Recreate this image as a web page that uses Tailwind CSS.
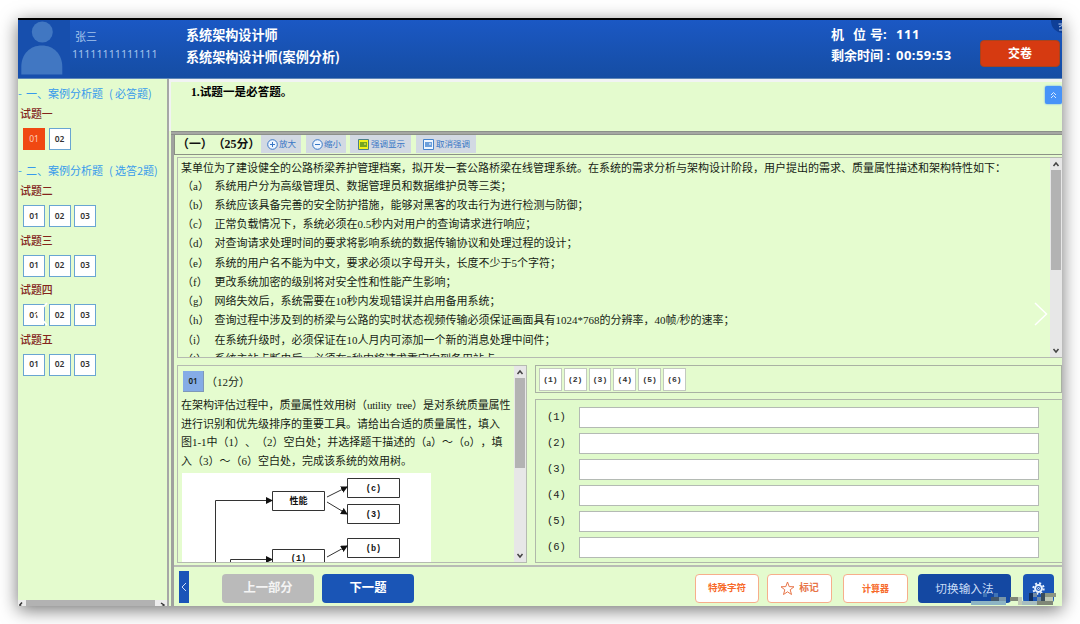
<!DOCTYPE html>
<html lang="zh-CN">

<head>
    <meta charset="UTF-8">
    <meta name="viewport" content="width=device-width, initial-scale=1.0">
    <title>系统架构设计师(案例分析)</title>
    <script src="https://cdn.jsdelivr.net/npm/@tailwindcss/browser@4"></script>
</head>

<body class="bg-white w-[1080px] h-[624px] overflow-hidden p-[18px] [text-spacing-trim:space-all] font-['Noto_Sans','Noto_Sans_CJK_SC',sans-serif]">
<div class="relative w-[1044px] h-[588px] shadow-[0_4px_17px_rgba(0,0,0,0.55)]">
<div class="w-full h-full flex flex-col overflow-hidden bg-[#e4fbce] whitespace-nowrap">

    <!-- Header -->
    <header class="relative h-[60px] shrink-0 flex border-t-2 border-black bg-linear-to-b from-[#1b58c4] to-[#154da3] text-white">
        <div class="w-[52px] h-[58px] bg-[#174fad]">
            <svg class="w-[52px] h-[58px]" viewBox="0 0 52 58" fill="#4177c2">
                <circle cx="24.300" cy="12" r="10.500" />
                <path d="M3.300 54.500V47C3.300 34 12 25.500 23.800 25.500S44.300 34 44.300 47v7.500z" />
            </svg>
        </div>
        <div class="w-[116px] pl-[2px] text-[#a4c4ec]">
            <div class="h-[17px] mt-[8px] pl-[3px] leading-[17px] text-[11px]">张三</div>
            <div class="h-[18px] leading-[18px] text-[10.7px]">11111111111111</div>
        </div>
        <div class="w-[645px] pt-[4px] text-[13.1px] font-bold font-['Noto_Sans_CJK_SC',sans-serif]">
            <div class="h-[22px] leading-[22px]">系统架构设计师</div>
            <div class="h-[22px] leading-[22px]">系统架构设计师(案例分析)</div>
        </div>
        <div class="w-[149px] pt-[4px] text-[13px] font-bold">
            <div class="h-[21px] leading-[21px] flex"><span class="w-[22px]">机</span><span class="w-[17px]">位</span><span class="w-[26px]">号:</span><span class="tracking-[0.6px]">111</span></div>
            <div class="h-[21px] leading-[21px] flex"><span class="w-[65px]">剩余时间 :</span><span class="tracking-[0.45px]">00:59:53</span></div>
        </div>
        <button class="mt-[20px] w-[80px] h-[27px] rounded-[4px] border border-[#a8431f] bg-[#d63a11] text-[12px] font-bold">交卷</button>
        <svg class="absolute right-0 top-0 w-[12px] h-[15px]" viewBox="0 0 12 15">
            <circle cx="13" cy="1" r="12" fill="#0f3f97" />
            <path d="M8.500 4h4M9 7l3-1.500M9 10h3" stroke="#b6cdf0" fill="none" />
        </svg>
    </header>

    <div class="flex-1 min-h-0 flex border-t border-[#5e86b8]">
        <!-- Question list -->
        <aside class="w-[149px] flex flex-col text-[11px] font-['Noto_Sans_CJK_SC',sans-serif]">
            <div class="mt-[4px] h-[21px] leading-[20px] text-[#379aec] flex"><span class="w-[8px]">-</span><span class="w-[22px]">一、</span>案例分析题<span class="w-[12px] pl-[6px]">(</span>必答题)</div>
            <div class="h-[18px] leading-[18px] pl-[2px] text-[10.9px] font-medium text-[#83251c]">试题一</div>
            <div class="mt-[6px] pl-[5px] flex gap-[3.5px] text-[8.5px] font-['Noto_Sans']">
                <span class="w-[22px] h-[22px] flex items-center justify-center bg-[#f04812] text-[#ffd0bd]">01</span>
                <span class="w-[22px] h-[22px] flex items-center justify-center bg-white border border-[#69a5d2] font-semibold text-[#333]">02</span>
            </div>
            <div class="mt-[10px] h-[21px] leading-[20px] text-[#379aec] flex"><span class="w-[8px]">-</span><span class="w-[22px]">二、</span>案例分析题<span class="w-[12px] pl-[6px]">(</span>选答2题)</div>
            <div id="optional"></div>
            <!-- horizontal scrollbar -->
            <div class="mt-auto h-[6px] flex justify-between bg-[#ececec] overflow-hidden">
                <svg class="w-[8px] h-[6px]" viewBox="0 0 8 6"><path d="M4 2.500 1.800 5 4 7.500" stroke="#333" stroke-width="1.500" fill="none" /></svg>
                <div class="w-[129px] bg-[#b2b2b2]"></div>
                <svg class="w-[12px] h-[6px]" viewBox="0 0 12 6"><path d="M6 3 9 5 6 7.500" stroke="#333" stroke-width="1.500" fill="none" /></svg>
            </div>
        </aside>
        <div class="w-[2px] bg-[#a6a7a6]"></div>

        <main class="flex-1 min-w-0 flex flex-col">
            <div class="relative h-[52px] shrink-0 border-t-[3px] border-l-2 border-[#f1f3f3]">
                <div class="pl-[20px] h-[21px] leading-[22px] text-[11.6px] font-bold text-black font-['Liberation_Serif','Noto_Sans_CJK_SC',serif]">1.试题一是必答题。</div>
                <div class="absolute right-0 top-[4px] w-[17px] h-[18px] rounded-[2px] bg-[#4793f8] flex items-center justify-center shadow-[0_0_2px_#4793f8]">
                    <svg class="w-[7px] h-[8px]" viewBox="0 0 7 8" fill="none" stroke="#d9eaff"><path d="M1 4l2.500-2.500L6 4M1 7l2.500-2.500L6 7" /></svg>
                </div>
            </div>
            <div class="h-[4px] shrink-0 bg-[#a5a7a3] border-y border-[#8c908a] ml-[2px]"></div>

            <div class="flex-1 min-h-0 ml-[2px] flex flex-col border-l-[3px] border-[#a0a29f]">
                <!-- Toolbar -->
                <div class="h-[20px] shrink-0 flex border-b border-l border-[#8b9285] text-[#3776c5] text-[8.5px]">
                    <div class="w-[86px] pl-[2px] leading-[18px] text-[11.9px] font-bold text-[#111] font-['Liberation_Serif','Noto_Sans_CJK_SC',serif]">（一）（25分）</div>
                    <div class="w-[40px] h-[18px] mr-[5px] bg-[#d2d9e3] flex items-center pl-[6px] gap-[1px]">
                        <svg class="w-[11px] h-[11px]" viewBox="0 0 11 11" stroke="#3776c5" fill="#edf5ff"><circle cx="5.500" cy="5.500" r="4.800" /><path d="M3 5.500h5M5.500 3v5" /></svg>放大
                    </div>
                    <div class="w-[40px] h-[18px] mr-[4px] bg-[#d2d9e3] flex items-center pl-[6px] gap-[1px]">
                        <svg class="w-[11px] h-[11px]" viewBox="0 0 11 11" stroke="#3776c5" fill="#edf5ff"><circle cx="5.500" cy="5.500" r="4.800" /><path d="M3 5.500h5" /></svg>缩小
                    </div>
                    <div class="w-[61px] h-[18px] mr-[5px] bg-[#d2d9e3] flex items-center pl-[8px] gap-[2px]">
                        <svg class="w-[11px] h-[11px]" viewBox="0 0 11 11"><path d="M.5.500h10v10H.5z" fill="#f2f218" stroke="#4a7f88" /><path d="M2 3h7v5H2z" fill="#76a51e" /><path d="M6 5h2" stroke="#f5f56b" /></svg>强调显示
                    </div>
                    <div class="w-[60px] h-[18px] bg-[#d2d9e3] flex items-center pl-[7px] gap-[2px]">
                        <svg class="w-[11px] h-[11px]" viewBox="0 0 11 11"><path d="M.5.500h10v10H.5z" fill="#eef6ff" stroke="#4583cc" /><path d="M2 3h7v5H2z" fill="#6c9fdb" /><path d="M6 5h2" stroke="#fff" /></svg>取消强调
                    </div>
                </div>

                <!-- Background text -->
                <div class="relative mt-[2px] ml-[3px] h-[201px] shrink-0 flex border border-r-0 border-[#b5bab1] bg-[#e5fccf] text-[#161c14] text-[11px] font-['Liberation_Serif','Noto_Sans_CJK_SC',serif]">
                    <div class="flex-1 min-w-0 overflow-hidden pl-[3px]">
                        <div class="h-[18.500px] leading-[21px]">某单位为了建设健全的公路桥梁养护管理档案，拟开发一套公路桥梁在线管理系统。在系统的需求分析与架构设计阶段，用户提出的需求、质量属性描述和架构特性如下：</div>
                        <div id="needs"></div>
                    </div>
                    <svg class="absolute right-[14px] top-[143px] w-[14px] h-[26px]" viewBox="0 0 14 26" fill="none" stroke="#fff" stroke-width="1.500"><path d="M1 2l11.500 11L1 24" /></svg>
                    <div class="w-[12px] bg-[#e7e7e7] flex flex-col items-center">
                        <svg class="w-[8px] h-[12px]" viewBox="0 0 8 12" fill="none" stroke="#444" stroke-width="1.500"><path d="M1.500 8 4 5l2.500 3" /></svg>
                        <div class="w-[10px] h-[100px] bg-[#b3b3b3]"></div>
                        <svg class="w-[8px] h-[12px] mt-auto" viewBox="0 0 8 12" fill="none" stroke="#444" stroke-width="1.500"><path d="M1.500 4 4 7l2.500-3" /></svg>
                    </div>
                </div>

                <div class="mt-[7px] ml-[3px] h-[198px] shrink-0 flex">
                    <!-- Question -->
                    <div class="w-[350px] flex border border-[#b5bab1] bg-[#e5fccf] text-[#161c14] text-[11px] font-['Liberation_Serif','Noto_Sans_CJK_SC',serif]">
                        <div class="flex-1 min-w-0 overflow-hidden pl-[3px]">
                            <div class="mt-[5px] h-[25px] pl-[2px] flex">
                                <span class="w-[21px] h-[21px] flex items-center justify-center bg-[#85ace6] border-r border-b border-[#7e98b8] text-[8px] font-semibold font-['Noto_Sans']">01</span>
                                <span class="leading-[22px] ml-[2px]">（12分）</span>
                            </div>
                            <div class="leading-[18.500px]">
                                <div class="tracking-[-0.06px]">在架构评估过程中，质量属性效用树（<span class="tracking-[-0.25px]">utility&nbsp; tree</span>）是对系统质量属性</div>
                                <div>进行识别和优先级排序的重要工具。请给出合适的质量属性，填入</div>
                                <div class="tracking-[-0.02px]">图1-1中（1）、（2）空白处；并选择题干描述的（a）～（o），填</div>
                                <div>入（3）～（6）空白处，完成该系统的效用树。</div>
                            </div>
                            <svg class="ml-[1px] mt-[3px] w-[249px] h-[120px] bg-white" viewBox="0 0 249 120" fill="none" stroke="#333">
                                <defs>
                                    <marker id="head" markerWidth="8" markerHeight="8" refX="6" refY="3.500" orient="auto" markerUnits="userSpaceOnUse"><path d="M0 0l7 3.500-7 3.500z" fill="#111" stroke="none" /></marker>
                                </defs>
                                <path d="M90.500 18.500h52v19h-52zM165.500 5.500h52v19h-52zM165.500 31.500h52v19h-52zM90.500 76.500h52v19h-52zM165.500 65.500h52v19h-52z" />
                                <path d="M33.500 120V27.500H90" marker-end="url(#head)" />
                                <path d="M48.500 120V86.500H90" marker-end="url(#head)" />
                                <path d="M145 24l20-10" marker-end="url(#head)" />
                                <path d="M145 29l20 12" marker-end="url(#head)" />
                                <path d="M145 84l20-11" marker-end="url(#head)" />
                                <g fill="#111" stroke="none" font-size="9" text-anchor="middle" font-weight="bold">
                                    <text x="116.500" y="31">性能</text>
                                    <g font-family="Liberation Mono" font-size="8.500">
                                        <text x="191.500" y="18">(c)</text>
                                        <text x="191.500" y="44">(3)</text>
                                        <text x="116.500" y="88">(1)</text>
                                        <text x="191.500" y="78">(b)</text>
                                    </g>
                                </g>
                            </svg>
                        </div>
                        <div class="w-[12px] bg-[#e7e7e7] flex flex-col items-center">
                            <svg class="w-[8px] h-[12px]" viewBox="0 0 8 12" fill="none" stroke="#444" stroke-width="1.500"><path d="M1.500 8 4 5l2.500 3" /></svg>
                            <div class="w-[10px] h-[90px] bg-[#b3b3b3]"></div>
                            <svg class="w-[8px] h-[12px] mt-auto" viewBox="0 0 8 12" fill="none" stroke="#444" stroke-width="1.500"><path d="M1.500 4 4 7l2.500-3" /></svg>
                        </div>
                    </div>

                    <!-- Answers -->
                    <div class="flex-1 ml-[8px] flex flex-col font-['Liberation_Mono',monospace]">
                        <div id="tabs" class="h-[28px] pl-[3px] pt-[2px] flex gap-[2px] border border-[#a9b1a3]"></div>
                        <div id="answers" class="mt-[6px] flex-1 pt-[7px] pl-[11px] flex flex-col gap-[5.1px] border border-r-0 border-[#b0b8aa] bg-[#e0facb]"></div>
                    </div>
                </div>

                <!-- Footer -->
                <footer class="relative mt-[2px] flex-1 flex border-t-2 border-[#b8bbb5] text-[12.3px]">
                    <button class="ml-[5px] mt-[4px] w-[10px] h-[32px] bg-[#1a54b8] flex items-center justify-center">
                        <svg class="w-[6px] h-[10px]" viewBox="0 0 6 10" fill="none" stroke="#cfe0fa"><path d="M5 1 1 5l4 4" /></svg>
                    </button>
                    <button class="ml-[33px] mt-[7px] w-[92px] h-[29px] rounded-[4px] bg-[#bababa] text-[#f4f4f4] font-bold">上一部分</button>
                    <button class="ml-[8px] mt-[7px] w-[92px] h-[29px] rounded-[4px] bg-[#1a55b6] text-white font-bold">下一题</button>
                    <button class="ml-[281px] mt-[7px] w-[64px] h-[29px] rounded-[4px] bg-white border border-[#f7ae8b] text-[9.5px] font-bold text-[#f76a2a]">特殊字符</button>
                    <button class="ml-[8px] mt-[7px] w-[65px] h-[29px] rounded-[4px] bg-white border border-[#f7ae8b] text-[9.8px] font-bold text-[#e87548] flex items-center justify-center gap-[4px]">
                        <svg class="w-[15px] h-[15px]" viewBox="0 0 15 15" fill="none" stroke="#e87548"><path d="M7.500 1l1.700 4.600 4.800.2-3.800 3 1.300 4.700-4-2.700-4 2.700 1.300-4.700L1 5.800l4.800-.2z" /></svg>标记
                    </button>
                    <button class="ml-[11px] mt-[7px] w-[65px] h-[29px] rounded-[4px] bg-white border border-[#f7ae8b] text-[9px] font-bold text-[#f76a2a]">计算器</button>
                    <button class="ml-[10px] mt-[7px] w-[93px] h-[29px] rounded-[4px] bg-[#1448a2] text-[11.7px] text-[#c9dcf6]">切换输入法</button>
                    <button class="ml-[12px] mt-[7px] w-[31px] h-[29px] rounded-[4px] bg-[#1a55b6] flex items-center justify-center">
                        <svg class="w-[13px] h-[13px]" viewBox="0 0 13 13" fill="none" stroke="#e8f2ff">
                            <circle cx="6.500" cy="6.500" r="5.200" stroke-width="2" stroke-dasharray="2.040 2.040" />
                            <circle cx="6.500" cy="6.500" r="3.400" stroke-width="2" />
                            <circle cx="6.500" cy="6.500" r="1" stroke-width="1" />
                        </svg>
                    </button>
                    <!-- pixelated mark in the corner -->
                    <svg class="absolute right-[4px] bottom-0 w-[88px] h-[14px]" viewBox="0 0 88 14">
                        <path d="M1 9h35v4H1z" fill="#8db4c4" />
                        <path d="M13 1h4v4h-4zM24 1h4v4h-4z" fill="#3f73b5" />
                        <path d="M21 5h8v4h-8z" fill="#42566a" /><path d="M29 5h7v4h-7z" fill="#7895a8" />
                        <path d="M40 5h8v4h-8zM67 9h16v4H67z" fill="#7f8777" /><path d="M48 5h4v8h-4zM75 5h8v4h-8z" fill="#c0c9b6" />
                        <path d="M59 1h4v8h-4z" fill="#12305f" /><path d="M63 1h4v4h-4zM67 5h4v4h-4z" fill="#718ba5" />
                        <path d="M71 1h4v8h-4z" fill="#394c5c" /><path d="M75 1h11v4H75z" fill="#8c9682" /><path d="M52 9h15v4H52z" fill="#a7bdc0" />
                    </svg>
                </footer>
            </div>
        </main>
    </div>
</div>
    <!-- gallery arrow, left side -->
    <svg class="absolute left-[18px] top-[284px] w-[12px] h-[24px]" viewBox="0 0 12 24" fill="none" stroke="#fff" stroke-width="1.800"><path d="M11 1 1 12l10 11" /></svg>
</div>

<script type="text/javascript">
    var needs = [
        ['a', '系统用户分为高级管理员、数据管理员和数据维护员等三类；'],
        ['b', '系统应该具备完善的安全防护措施，能够对黑客的攻击行为进行检测与防御；'],
        ['c', '正常负载情况下，系统必须在0.5秒内对用户的查询请求进行响应；'],
        ['d', '对查询请求处理时间的要求将影响系统的数据传输协议和处理过程的设计；'],
        ['e', '系统的用户名不能为中文，要求必须以字母开头，长度不少于5个字符；'],
        ['f', '更改系统加密的级别将对安全性和性能产生影响；'],
        ['g', '网络失效后，系统需要在10秒内发现错误并启用备用系统；'],
        ['h', '查询过程中涉及到的桥梁与公路的实时状态视频传输必须保证画面具有1024*768的分辨率，40帧/秒的速率；'],
        ['i', '在系统升级时，必须保证在10人月内可添加一个新的消息处理中间件；'],
        ['j', '系统主站点断电后，必须在3秒内将请求重定向到备用站点。']
    ];
    document.getElementById('needs').innerHTML = needs.map(function (n) {
        return '<div class="h-[19.25px] leading-[19px] flex"><span class="w-[33.500px] pl-[1px]">（' + n[0] + '）</span><span>' + n[1] + '</span></div>';
    }).join('');

    document.getElementById('optional').innerHTML = ['二', '三', '四', '五'].map(function (name) {
        var boxes = ['01', '02', '03'].map(function (no) {
            return '<span class="w-[22px] h-[22px] flex items-center justify-center bg-white border border-[#69a5d2] font-semibold text-[#333]">' + no + '</span>';
        }).join('');
        return '<div class="h-[49.500px]"><div class="h-[18px] leading-[18px] pl-[2px] text-[10.9px] font-medium text-[#83251c]">试题' + name + '</div>' +
            '<div class="mt-[6px] pl-[5px] flex gap-[3.5px] text-[8.5px] font-[\'Noto_Sans\']">' + boxes + '</div></div>';
    }).join('');

    var tabs = '', answers = '';
    for (var i = 1; i <= 6; i++) {
        tabs += '<span class="w-[22.800px] h-[23px] flex items-center justify-center bg-white border border-[#c3c9c0] text-[8px] font-bold text-[#333]">(' + i + ')</span>';
        answers += '<label class="h-[21px] flex items-center text-[10.5px] text-[#222]"><span class="w-[32px]">(' + i + ')</span><input type="text" class="w-[460px] h-[21px] bg-white border border-[#b4bab4]" /></label>';
    }
    document.getElementById('tabs').innerHTML = tabs;
    document.getElementById('answers').innerHTML = answers;
</script>
</body>

</html>
